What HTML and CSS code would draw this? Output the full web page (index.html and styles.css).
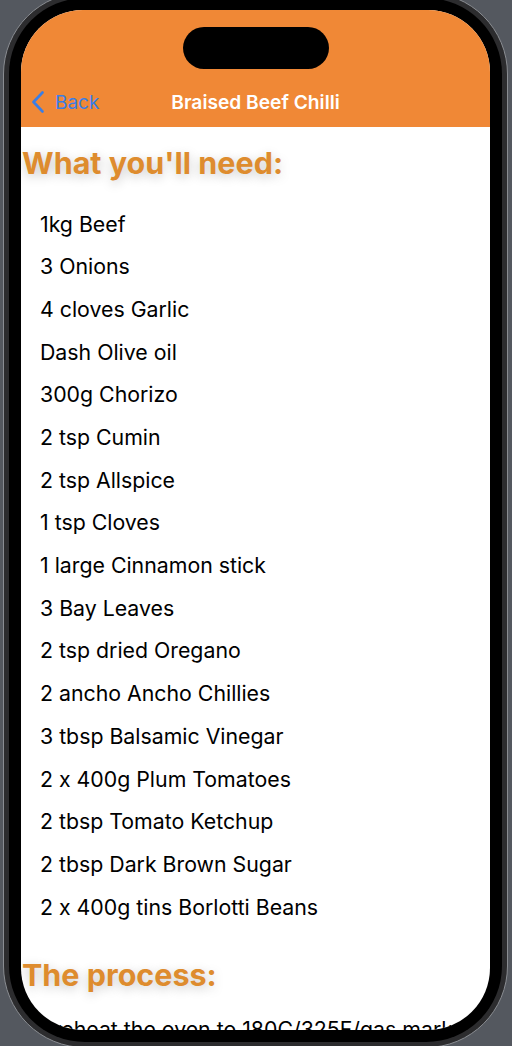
FILE: index.html
```html
<!DOCTYPE html>
<html>
<head>
<meta charset="utf-8">
<link rel="stylesheet" href="styles.css">
</head>
<body>
<div class="device">
  <div class="bezel">
    <div class="screen">
      <header class="nav">
        <div class="island"></div>
        <div class="navbar">
          <div class="back">
            <svg class="chev" width="14" height="22" viewBox="0 0 14 22"><path d="M11.5 1.5 L2.5 11 L11.5 20.5" fill="none" stroke="#3a7ee6" stroke-width="2.6" stroke-linecap="round" stroke-linejoin="round"/></svg>
            <span>Back</span>
          </div>
          <div class="title">Braised Beef Chilli</div>
        </div>
      </header>
      <main class="content">
        <h2 class="heading">What you'll need:</h2>
        <ul class="list">
          <li>1kg Beef</li>
          <li>3 Onions</li>
          <li>4 cloves Garlic</li>
          <li>Dash Olive oil</li>
          <li>300g Chorizo</li>
          <li>2 tsp Cumin</li>
          <li>2 tsp Allspice</li>
          <li>1 tsp Cloves</li>
          <li>1 large Cinnamon stick</li>
          <li>3 Bay Leaves</li>
          <li>2 tsp dried Oregano</li>
          <li>2 ancho Ancho Chillies</li>
          <li>3 tbsp Balsamic Vinegar</li>
          <li>2 x 400g Plum Tomatoes</li>
          <li>2 tbsp Tomato Ketchup</li>
          <li>2 tbsp Dark Brown Sugar</li>
          <li>2 x 400g tins Borlotti Beans</li>
        </ul>
        <h2 class="heading heading-process">The process:</h2>
        <p class="step">Preheat the oven to 180C/325F/gas mark 4.</p>
      </main>
    </div>
  </div>
</div>
</body>
</html>
```

FILE: styles.css
```css
html, body {
  margin: 0;
  padding: 0;
  height: 100%;
  overflow: hidden;
  background: #54585f;
  font-family: Inter, "Liberation Sans", sans-serif;
  font-feature-settings: "calt" 0;
}
.device {
  margin: -8px 0 0 3px;
  width: 505px;
  box-sizing: border-box;
  border: 1px solid #8a8d92;
  border-radius: 82px;
  background: #2c2c2e;
  padding: 5px;
}
.bezel {
  background: #000;
  border-radius: 76px;
  padding: 12px;
}
.screen {
  height: 1020px;
  border-radius: 62px;
  overflow: hidden;
  background: #fff;
}
.nav {
  height: 117px;
  background: #f08836;
  display: flex;
  flex-direction: column;
  align-items: center;
}
.island {
  margin-top: 17px;
  width: 146px;
  height: 42px;
  border-radius: 21px;
  background: #000;
}
.navbar {
  position: relative;
  width: 100%;
  margin-top: 18px;
  height: 30px;
  display: flex;
  align-items: center;
  justify-content: center;
}
.back {
  position: absolute;
  left: 10px;
  top: 0;
  height: 30px;
  display: flex;
  align-items: center;
  gap: 10px;
  color: #3a7ee6;
  font-size: 19px;
}
.title {
  color: #fff;
  font-size: 19.2px;
  font-weight: 600;
}
.content {
  padding: 18px 0 0 1px;
}
.heading {
  margin: 0;
  font-size: 30.5px;
  line-height: 36px;
  font-weight: 700;
  color: #de8c2e;
  text-shadow: 0 3px 11px rgba(0, 0, 0, 0.22);
}
.list {
  list-style: none;
  margin: 21.6px 0 0 0;
  padding: 0 0 0 18px;
}
.list li {
  height: 42.69px;
  line-height: 42.69px;
  font-size: 21.3px;
  color: #000;
}
.heading-process {
  margin-top: 28.6px;
}
.step {
  margin: 23px 0 0 18px;
  font-size: 21.3px;
  line-height: 26px;
  color: #000;
}
```
